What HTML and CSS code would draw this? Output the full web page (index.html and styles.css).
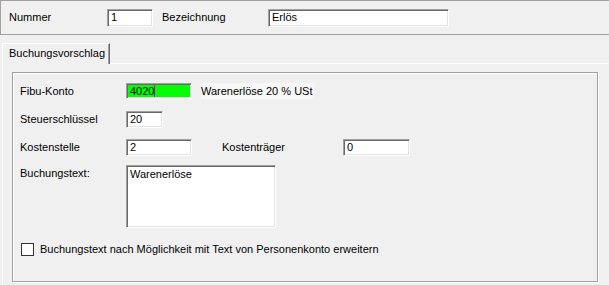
FILE: index.html
```html
<!DOCTYPE html>
<html lang="de">
<head>
    <meta charset="UTF-8">
    <title>Buchungsvorschlag</title>
    <link rel="stylesheet" href="styles.css">
</head>
<body>

    <!-- Kopfbereich -->
    <div class="head">
        <span class="lbl lbl-nr">Nummer</span>
        <div class="field f-nr">1</div>
        <span class="lbl lbl-bez">Bezeichnung</span>
        <div class="field f-bez">Erlös</div>
    </div>

    <!-- Reiter -->
    <div class="tabs">
        <div class="tab">Buchungsvorschlag</div>
        <div class="tab-rest"></div>
    </div>

    <div class="page">
        <div class="group">
            <div class="row">
                <span class="lbl col">Fibu-Konto</span>
                <div class="field f-konto">4020<span class="caret"></span></div>
                <span class="konto-name">Warenerlöse 20 % USt</span>
            </div>
            <div class="row">
                <span class="lbl col">Steuerschlüssel</span>
                <div class="field f-steuer">20</div>
            </div>
            <div class="row row-kst">
                <span class="lbl col">Kostenstelle</span>
                <div class="field f-kst">2</div>
                <span class="lbl lbl-ktr">Kostenträger</span>
                <div class="field f-ktr">0</div>
            </div>
            <div class="row row-text">
                <span class="lbl col">Buchungstext:</span>
                <div class="field f-text">Warenerlöse</div>
            </div>
            <label class="check-row">
                <span class="check"></span>
                Buchungstext nach Möglichkeit mit Text von Personenkonto erweitern
            </label>
        </div>
    </div>

</body>
</html>
```

FILE: styles.css
```css
/* General */
* {
    margin: 0;
    padding: 0;
    box-sizing: border-box;
}
body {
    background-color: #f0f0f0;
    font-family: "Liberation Sans", Arial, sans-serif;
    font-size: 11px;
    color: #000;
    overflow: hidden;
}
.lbl {
    line-height: 17px;
    white-space: nowrap;
}

/* Sunken edit fields */
.field {
    height: 17px;
    background-color: #fff;
    border: 1px solid;
    border-color: #a0a0a0 #fff #fff #a0a0a0;
    box-shadow: inset 1px 1px 0 #696969, inset -1px -1px 0 #e3e3e3;
    padding: 0 3px;
    line-height: 15px;
    white-space: nowrap;
}

/* Head panel */
.head {
    display: flex;
    align-items: flex-start;
    height: 35px;
    border-top: 1px solid #a0a0a0;
    border-left: 1px solid #a0a0a0;
    border-bottom: 1px solid #a0a0a0;
    padding: 8px 0 0 8px;
}
.lbl-nr {
    width: 98px;
}
.f-nr {
    width: 46px;
    height: 18px;
}
.lbl-bez {
    margin-left: 9px;
    width: 106px;
}
.f-bez {
    width: 181px;
    height: 18px;
}

/* Tabs */
.tabs {
    display: flex;
    align-items: flex-end;
    height: 29px;
}
.tab {
    margin-left: 2px;
    width: 108px;
    height: 21px;
    border-top: 1px solid #fff;
    border-left: 1px solid #fff;
    border-right: 1px solid #696969;
    box-shadow: inset -1px 0 0 #a0a0a0;
    padding-left: 6px;
    line-height: 19px;
    white-space: nowrap;
}
.tab-rest {
    flex: 1;
    height: 29px;
    border-bottom: 1px solid #fff;
}

/* Tab page */
.page {
    margin-left: 2px;
    border-left: 1px solid #fff;
    padding: 8px 0 0 9px;
    height: 230px;
}
.group {
    width: 586px;
    height: 210px;
    border: 1px solid #a0a0a0;
    box-shadow: inset 1px 1px 0 #fff, 1px 1px 0 #fff;
    padding: 10px 0 0 7px;
}
.row {
    display: flex;
    align-items: flex-start;
    margin-bottom: 11px;
}
.row-kst {
    margin-bottom: 9px;
}
.row-text {
    margin-bottom: 15px;
}
.col {
    width: 106px;
}
.f-konto {
    width: 66px;
    height: 16px;
    background-color: #00ff00;
    line-height: 14px;
}
.caret {
    display: inline-block;
    width: 1px;
    height: 12px;
    background-color: #c000c0;
    vertical-align: -2px;
}
.konto-name {
    margin-left: 9px;
    line-height: 16px;
    padding-right: 2px;
    background-color: #f7f7f7;
}
.f-steuer {
    width: 37px;
}
.f-kst {
    width: 66px;
}
.lbl-ktr {
    margin-left: 30px;
    width: 121px;
}
.f-ktr {
    width: 67px;
}
.f-text {
    width: 150px;
    height: 63px;
    line-height: 17px;
}

/* Checkbox */
.check-row {
    display: flex;
    align-items: center;
    gap: 6px;
    padding-left: 1px;
    line-height: 13px;
}
.check {
    width: 13px;
    height: 13px;
    background-color: #fff;
    border: 1px solid #333;
}
```
